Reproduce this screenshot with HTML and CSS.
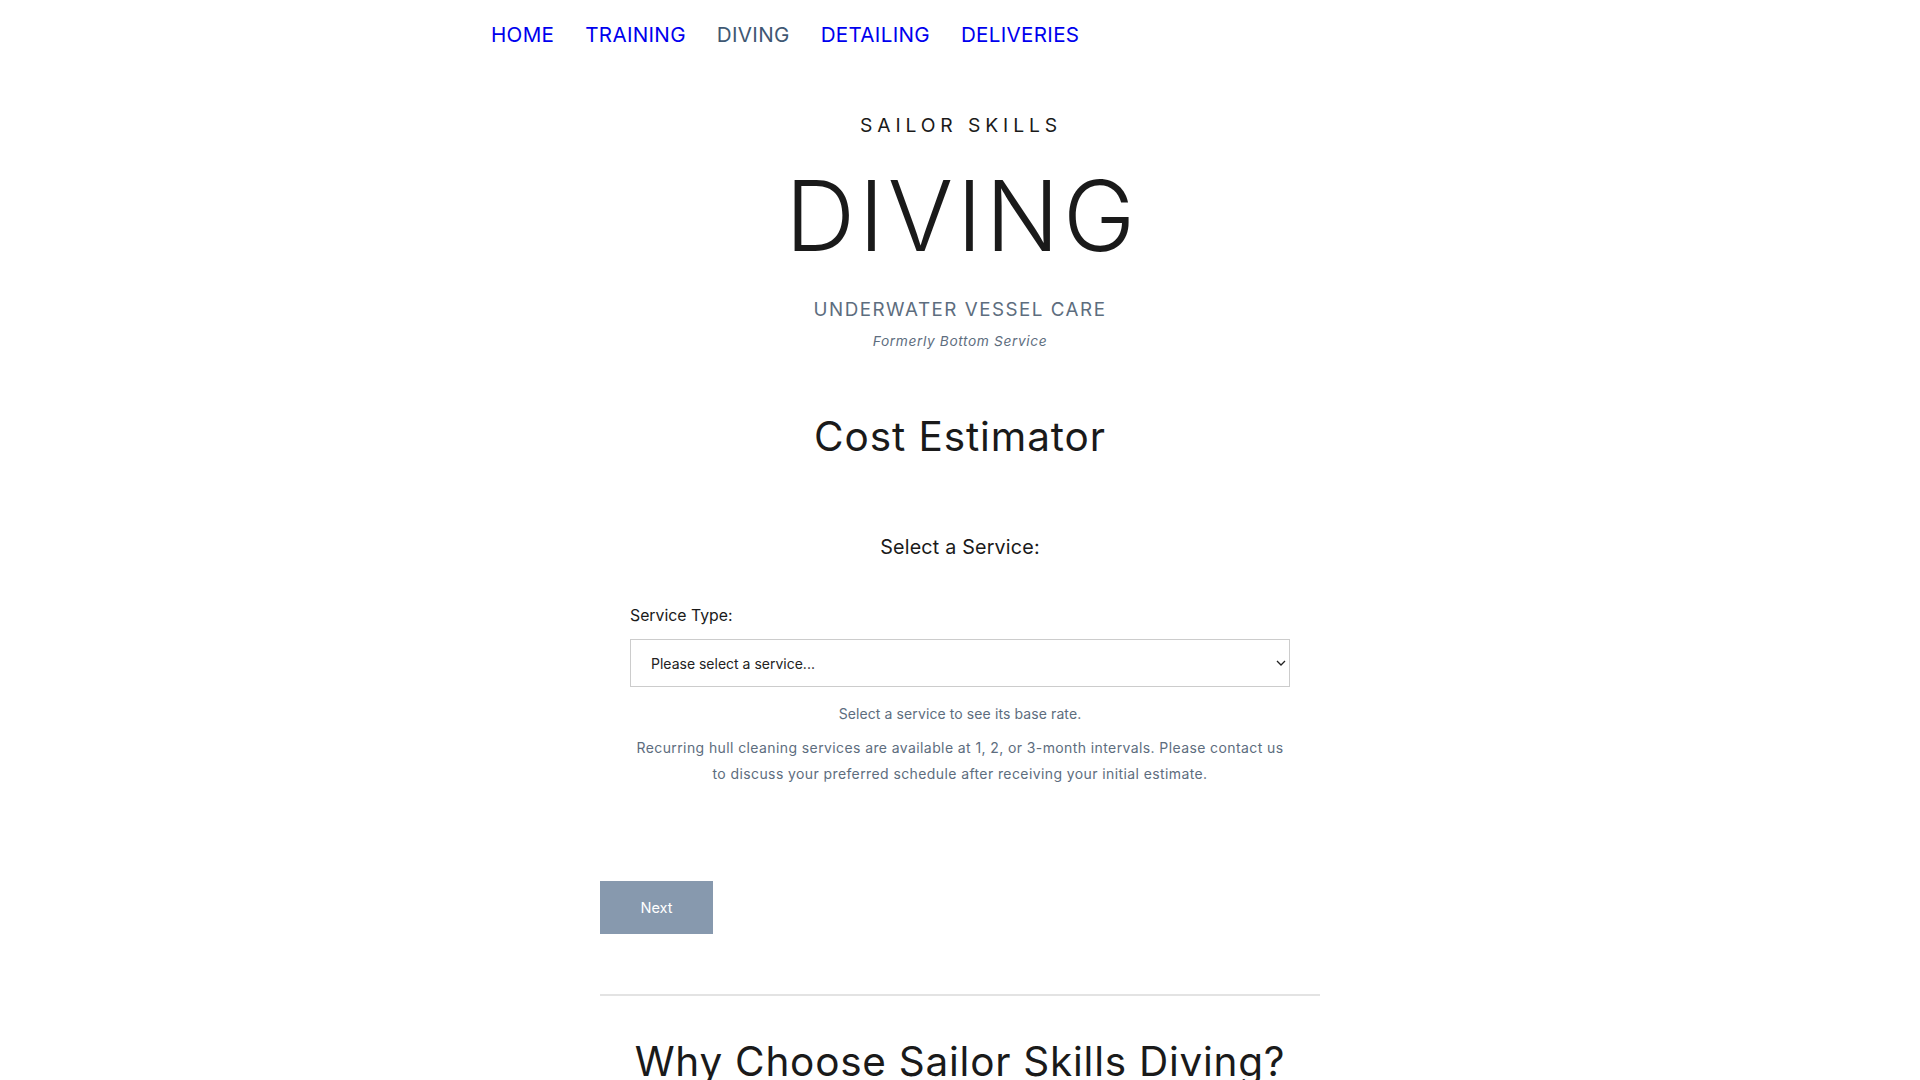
FILE: index.html
```html
<!DOCTYPE html>
<html lang="en">
<head>
<meta charset="utf-8">
<title>Sailor Skills Diving</title>
<link rel="stylesheet" href="styles.css">
</head>
<body>
<header class="site-header">
  <nav class="main-nav">
    <a href="#" class="nav-link">HOME</a>
    <a href="#" class="nav-link">TRAINING</a>
    <a href="#" class="nav-link is-active">DIVING</a>
    <a href="#" class="nav-link">DETAILING</a>
    <a href="#" class="nav-link">DELIVERIES</a>
  </nav>
</header>
<main class="page">
  <section class="hero">
    <p class="brand">SAILOR SKILLS</p>
    <h1 class="hero-title">DIVING</h1>
    <p class="hero-sub">UNDERWATER VESSEL CARE</p>
    <p class="hero-note">Formerly Bottom Service</p>
  </section>
  <section class="estimator">
    <h2 class="section-title">Cost Estimator</h2>
    <div class="step">
      <h3 class="step-title">Select a Service:</h3>
      <div class="field">
        <label class="field-label" for="service">Service Type:</label>
        <div class="select-wrap">
          <select id="service" class="field-select">
            <option>Please select a service...</option>
          </select>
          <svg class="select-arrow" width="10" height="6" viewBox="0 0 10 6" aria-hidden="true">
            <path d="M1 1 L5 5 L9 1" fill="none" stroke="#222" stroke-width="1.3"/>
          </svg>
        </div>
      </div>
      <p class="hint hint-rate">Select a service to see its base rate.</p>
      <p class="hint">Recurring hull cleaning services are available at 1, 2, or 3-month intervals. Please contact us to discuss your preferred schedule after receiving your initial estimate.</p>
    </div>
    <div class="actions">
      <button type="button" class="btn-next">Next</button>
    </div>
  </section>
  <hr class="divider">
  <section class="why">
    <h2 class="section-title why-title">Why Choose Sailor Skills Diving?</h2>
  </section>
</main>
</body>
</html>
```
FILE: styles.css
```css
* { box-sizing: border-box; }
body {
  margin: 0;
  font-family: Inter, "Noto Sans", sans-serif;
  color: #1a1a1a;
  background: #fff;
}
.site-header { padding-top: 20px; }
.main-nav {
  display: flex;
  gap: 31px;
  width: 960px;
  margin: 0 auto;
  padding-left: 11px;
}
.nav-link {
  font-size: 20.6px;
  line-height: 30px;
  letter-spacing: 0.3px;
  color: #0000ee;
  text-decoration: none;
}
.nav-link.is-active { color: #3f5873; }

.page { width: 720px; margin: 0 auto; }
.hero { text-align: center; padding-top: 61px; }
.brand {
  margin: 0;
  font-size: 19.3px;
  line-height: 28px;
  letter-spacing: 4.9px;
  padding-left: 2px;
}
.hero-title {
  margin: 22px 0 0;
  font-size: 97.2px;
  line-height: 110px;
  font-weight: 300;
  letter-spacing: 3.5px;
  padding-left: 4px;
}
.hero-sub {
  margin: 26px 0 0;
  font-size: 18.8px;
  line-height: 26px;
  letter-spacing: 1.5px;
  color: #5d6d7e;
}
.hero-note {
  margin: 8px 0 0;
  font-size: 13.75px;
  line-height: 20px;
  font-style: italic;
  letter-spacing: 0.6px;
  color: #5d6d7e;
}
.estimator { text-align: center; }
.section-title {
  margin: 62px 0 0;
  font-size: 40.5px;
  line-height: 48px;
  font-weight: 400;
  letter-spacing: 0.9px;
}
.step { padding: 0 30px; }
.step-title {
  margin: 72px 0 0;
  font-size: 19.7px;
  line-height: 28px;
  font-weight: 400;
  letter-spacing: 0.2px;
}
.field { text-align: left; margin-top: 43px; }
.field-label {
  display: block;
  font-size: 15.8px;
  line-height: 24px;
  margin-bottom: 11px;
}
.select-wrap { position: relative; }
.field-select {
  display: block;
  width: 100%;
  height: 48px;
  padding: 0 30px 0 20px;
  border: 1px solid #cccccc;
  border-radius: 0;
  background: #fff;
  font-family: Inter, sans-serif;
  font-size: 14px;
  color: #222;
  appearance: none;
  -webkit-appearance: none;
}
.select-arrow {
  position: absolute;
  right: 4px;
  top: 21px;
  pointer-events: none;
}
.hint {
  margin: 8px 0 0;
  font-size: 14px;
  line-height: 26px;
  letter-spacing: 0.4px;
  color: #5d6d7e;
}
.hint-rate { margin-top: 14px; letter-spacing: 0.1px; }
.actions { text-align: left; margin-top: 94px; }
.btn-next {
  width: 113px;
  height: 53px;
  border: none;
  background: #8799ae;
  color: #fff;
  font-family: Inter, sans-serif;
  font-size: 14.6px;
}
.divider {
  margin: 60px 0 0;
  border: none;
  height: 2px;
  background: #e3e3e3;
}
.why { text-align: center; }
.why-title { margin-top: 42px; letter-spacing: 0.75px; }
```
